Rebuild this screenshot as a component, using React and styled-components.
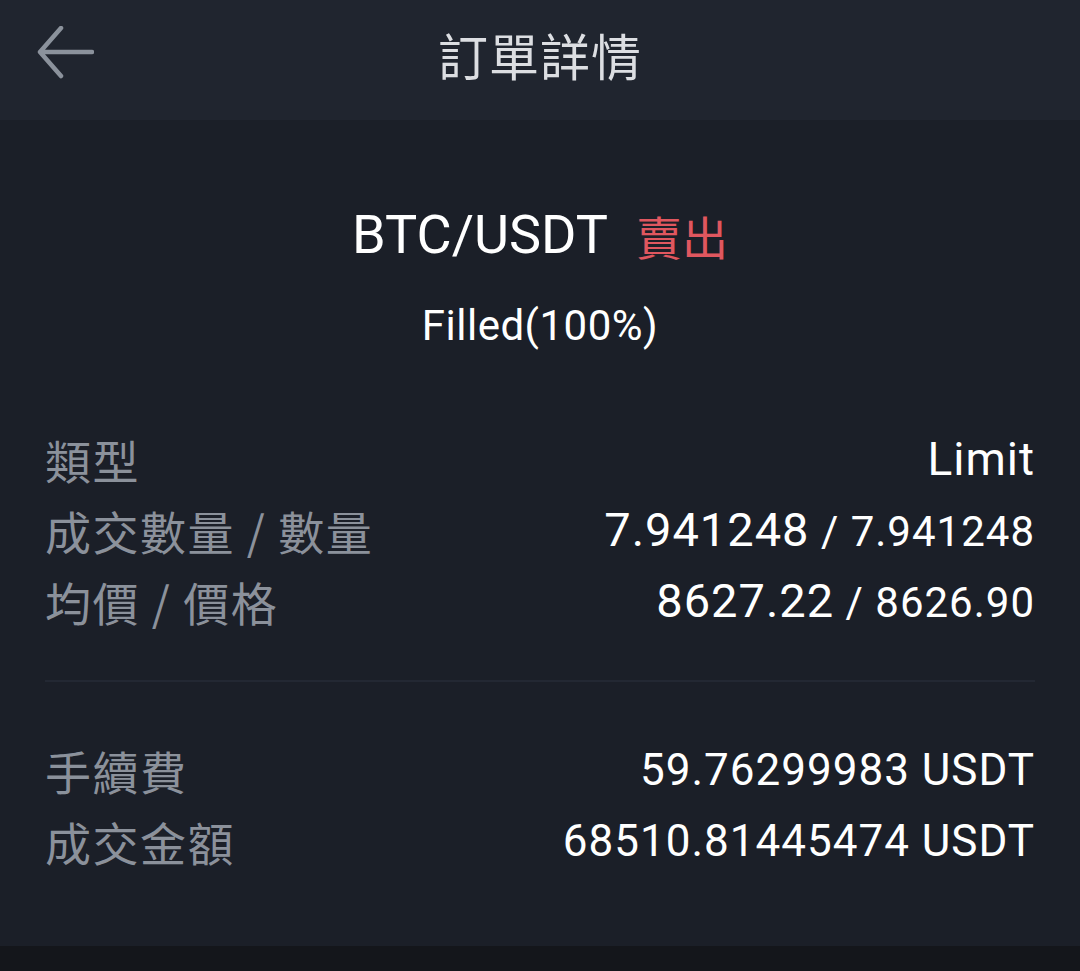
import React from 'react'
import styled, { createGlobalStyle } from 'styled-components';

const Global = createGlobalStyle`
  html, body {
    margin: 0;
    padding: 0;
    background: #14161b;
  }
  body {
    font-family: Roboto, "Noto Sans CJK TC", sans-serif;
  }
`

export default function App() {
    const details = [
        { label: "類型", main: "Limit", size: 46 },
        { label: "成交數量 / 數量", main: "7.941248", sub: "7.941248", size: 47 },
        { label: "均價 / 價格", main: "8627.22", sub: "8626.90", size: 47 },
    ];
    const totals = [
        { label: "手續費", main: "59.76299983 USDT", size: 44 },
        { label: "成交金額", main: "68510.81445474 USDT", size: 44 },
    ];
    return (
        <Page>
            <Global />
            <Header>
                <BackButton aria-label="back">
                    <svg width="58" height="54" viewBox="0 0 58 54" fill="none">
                        <path d="M56 26H4M25 2L4 26l21 24" stroke="#8b929c" strokeWidth="4.5" strokeLinecap="round" strokeLinejoin="round" />
                    </svg>
                </BackButton>
                <Title>訂單詳情</Title>
            </Header>
            <Body>
                <Summary>
                    <Pair>
                        BTC/USDT <Side>賣出</Side>
                    </Pair>
                    <Status>Filled(100%)</Status>
                </Summary>
                <Group>
                    {details.map((row) => (
                        <Row key={row.label}>
                            <Label>{row.label}</Label>
                            <Value $size={row.size}>
                                {row.main}
                                {row.sub && <Small> / {row.sub}</Small>}
                            </Value>
                        </Row>
                    ))}
                </Group>
                <Divider />
                <Group>
                    {totals.map((row) => (
                        <Row key={row.label}>
                            <Label>{row.label}</Label>
                            <Value $size={row.size}>{row.main}</Value>
                        </Row>
                    ))}
                </Group>
            </Body>
        </Page>
    );
}

const Page = styled.div`
    width: 1080px;
    min-height: 971px;
    background: #14161b;
`

const Header = styled.header`
    position: relative;
    height: 120px;
    background: #20252f;
    display: flex;
    align-items: center;
    justify-content: center;
`

const BackButton = styled.button`
    position: absolute;
    left: 36px;
    top: 26px;
    border: none;
    background: none;
    padding: 0;
    display: flex;
`

const Title = styled.h1`
    margin: 0 0 12px;
    font-size: 50px;
    font-weight: 400;
    color: #dcdee2;
    font-family: "Noto Sans CJK TC", sans-serif;
    letter-spacing: 1px;
`

const Body = styled.main`
    background: #1b1f28;
    height: 826px;
    padding: 0 45px;
    box-sizing: border-box;
`

const Summary = styled.section`
    display: flex;
    flex-direction: column;
    align-items: center;
    padding-top: 85px;
    padding-bottom: 75px;
`

const Pair = styled.div`
    font-size: 54px;
    line-height: 60px;
    color: #ffffff;
    display: flex;
    align-items: center;
    gap: 28px;
`

const Side = styled.span`
    font-family: "Noto Sans CJK TC", sans-serif;
    font-size: 46px;
    color: #e0575f;
`

const Status = styled.div`
    margin-top: 39px;
    font-size: 42px;
    line-height: 44px;
    color: #ffffff;
    letter-spacing: 0.5px;
`

const Group = styled.div`
    display: flex;
    flex-direction: column;
`

const Row = styled.div`
    display: flex;
    justify-content: space-between;
    align-items: center;
    height: 71px;
`

const Label = styled.span`
    font-family: "Noto Sans CJK TC", sans-serif;
    font-size: 46px;
    color: #8b919b;
    letter-spacing: 1.5px;
`

const Value = styled.span`
    font-size: ${(p) => p.$size}px;
    color: #ffffff;
    letter-spacing: 1px;
`

const Small = styled.span`
    font-size: 42px;
`

const Divider = styled.hr`
    border: none;
    border-top: 2px solid #232833;
    margin: 44px 0 52px;
`
